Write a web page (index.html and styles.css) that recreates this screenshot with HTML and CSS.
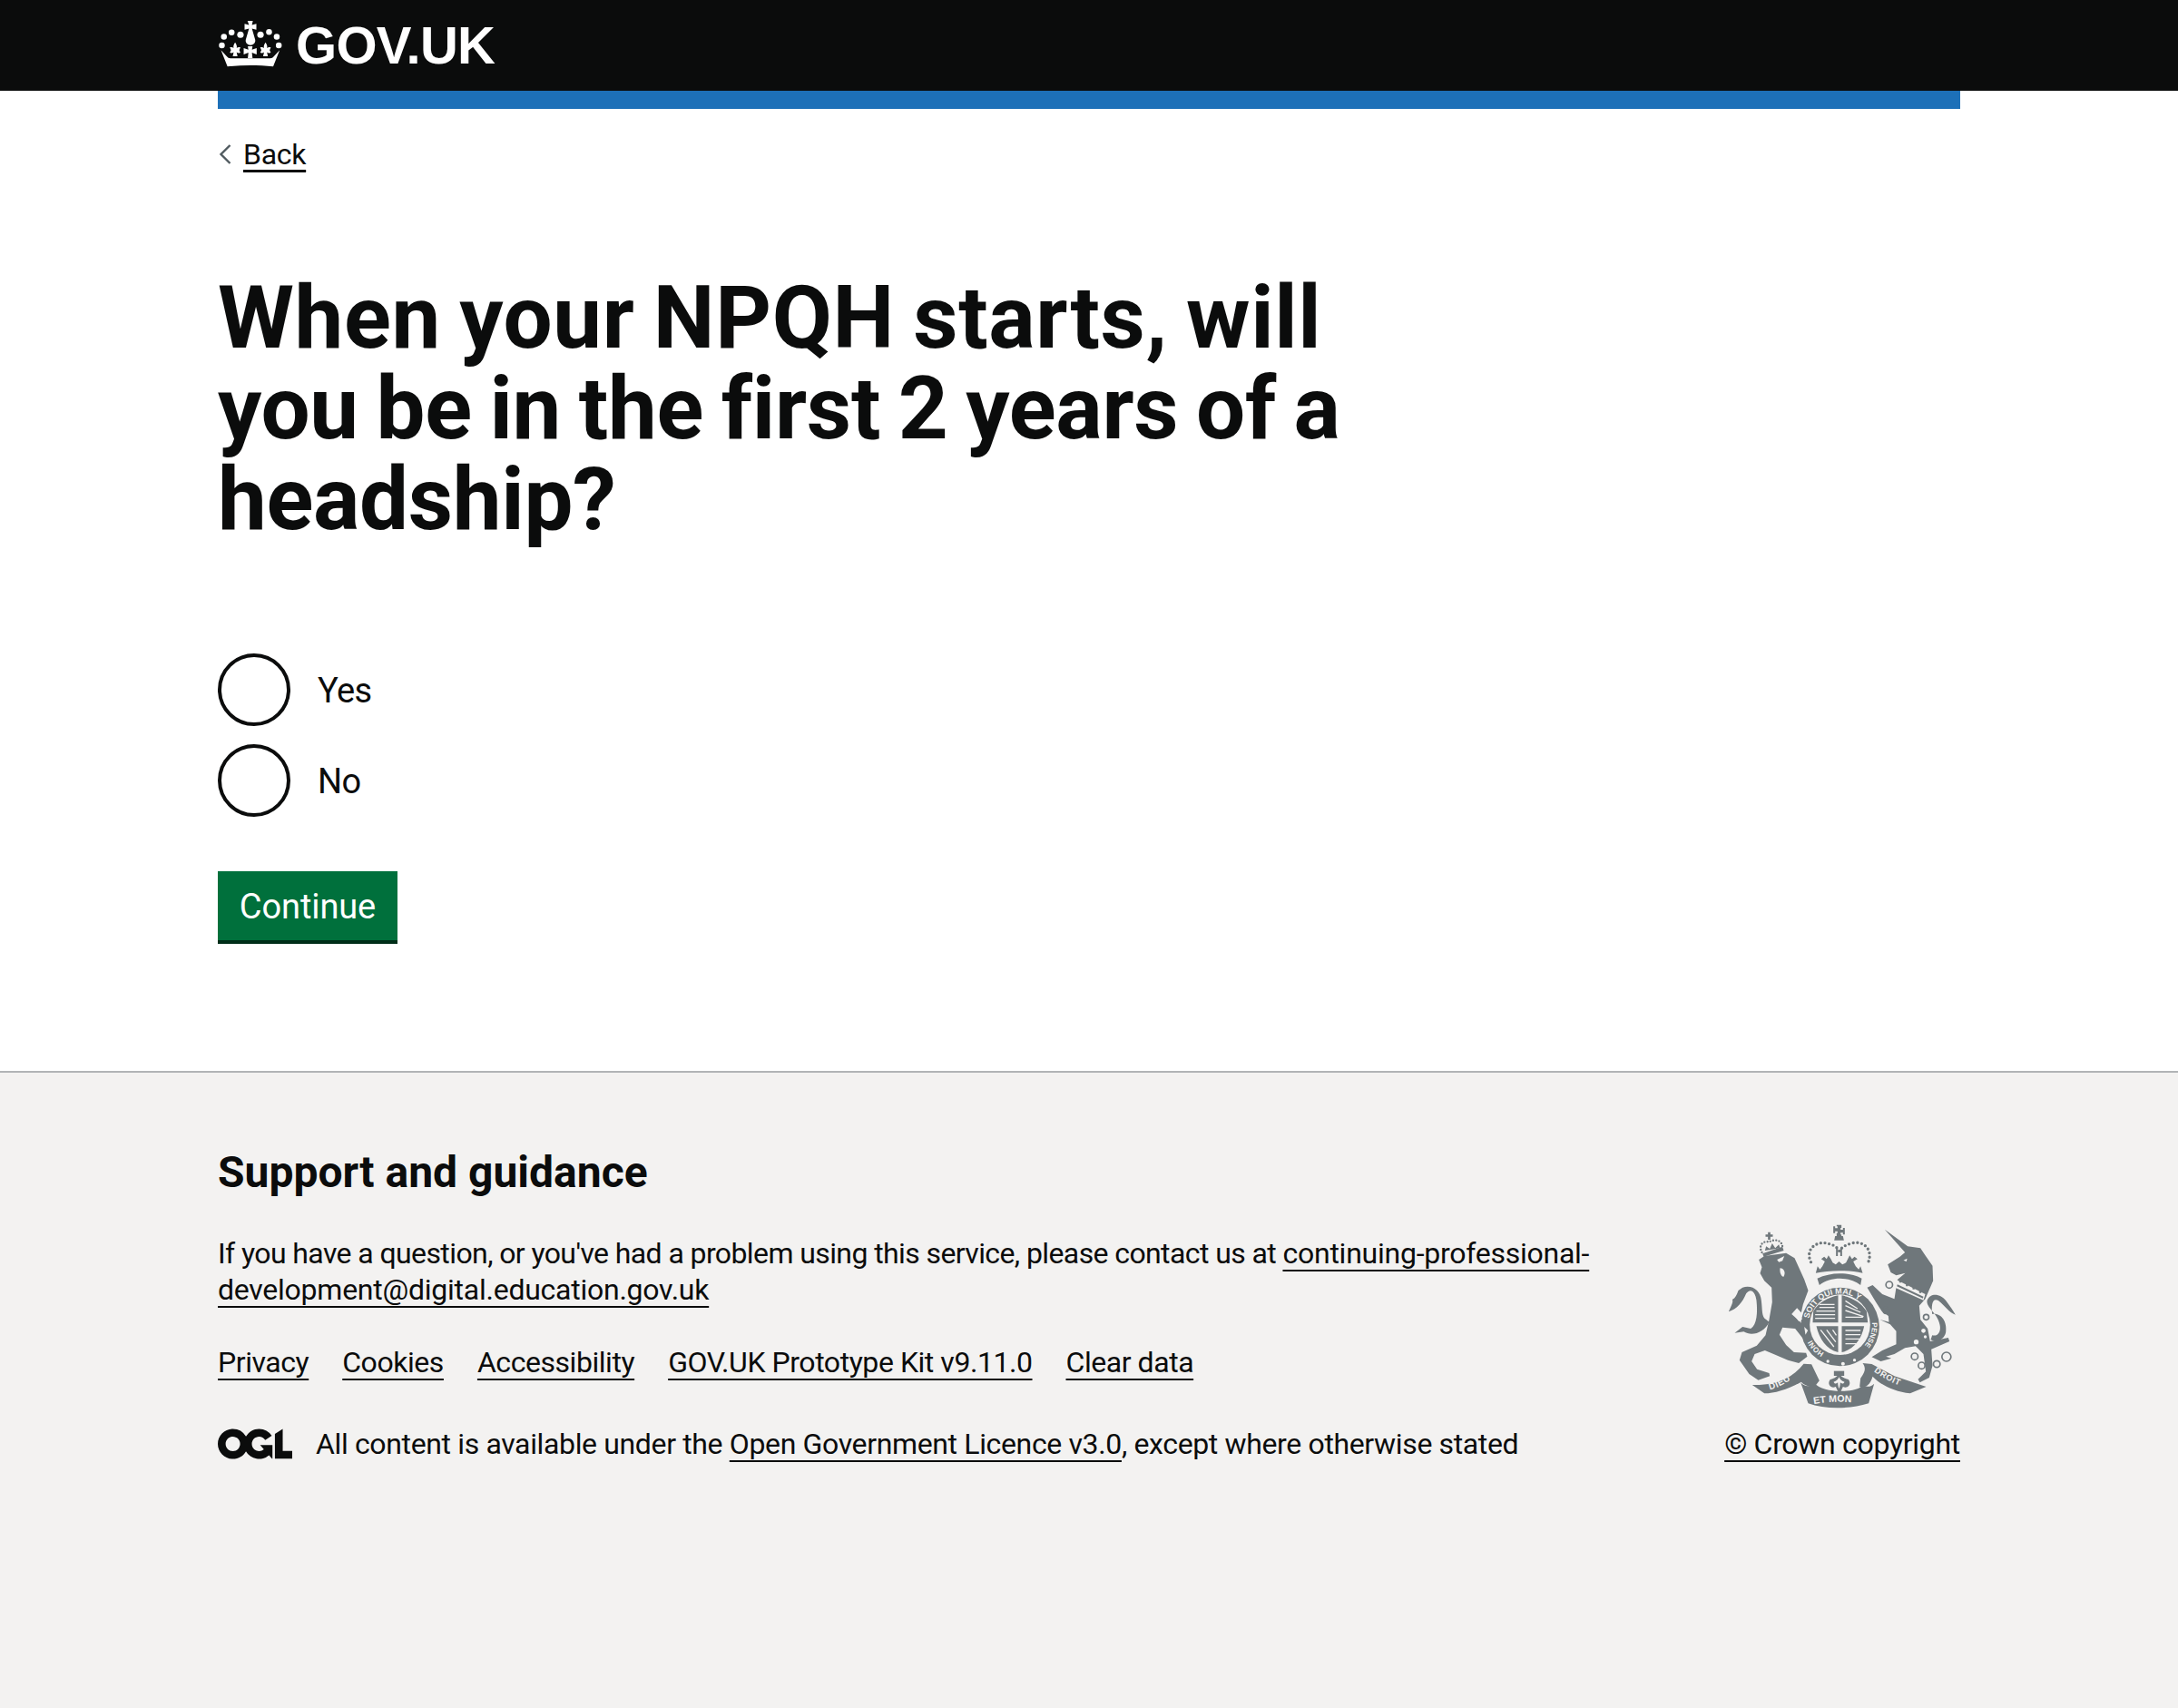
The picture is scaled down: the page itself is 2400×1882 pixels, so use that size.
FILE: index.html
```html
<!DOCTYPE html>
<html lang="en">
<head>
<meta charset="utf-8">
<title>When your NPQH starts, will you be in the first 2 years of a headship?</title>
<link rel="stylesheet" href="styles.css">
</head>
<body>
<header class="site-header">
  <div class="width">
    <a class="logo" href="#">
      <svg class="crown" viewBox="58 62 220 160" aria-hidden="true">
        <g fill="#fff">
          <circle cx="78" cy="119" r="10"/><circle cx="104" cy="104" r="10"/><circle cx="134" cy="112" r="11"/>
          <circle cx="202" cy="112" r="11"/><circle cx="231" cy="103" r="10"/><circle cx="257" cy="119" r="10"/>
          <circle cx="71" cy="148" r="10"/><circle cx="264" cy="148" r="10"/>
          <path d="M158 65h18l-3 14 15-4v20l-15-4 11 38c2 10-6 18-16 18s-18-8-16-18l11-38-15 4V75l15 4z"/>
          <path d="M116 138c5 8 7 13 5 19 3-3 8-4 13-2l-4 9 4 9c-5 2-10 1-13-2l3 14h-16l3-14c-3 3-8 4-13 2l4-9-4-9c5-2 10-1 13 2-2-6 0-11 5-19z"/>
          <path d="M219 138c5 8 7 13 5 19 3-3 8-4 13-2l-4 9 4 9c-5 2-10 1-13-2l3 14h-16l3-14c-3 3-8 4-13 2l4-9-4-9c5-2 10-1 13 2-2-6 0-11 5-19z"/>
          <path d="M159 151h16l-2 12 16-6v22l-16-6 2 18h-16l2-18-16 6v-22l16 6z"/>
          <path d="M68 164l20 22q4 6 12 6h135q8 0 12-6l20-22-22 56c-50-6-105-6-155 0z"/>
        </g>
      </svg>
      <span class="logo-text">GOV.UK</span>
    </a>
  </div>
</header>

<div class="width main-wrap">
  <div class="phase-bar"></div>
  <a class="back" href="#"><svg class="chevron" viewBox="0 0 14 24" aria-hidden="true"><path d="M12.5 2 2.5 12l10 10" fill="none" stroke="#505a5f" stroke-width="2.4"/></svg><span class="back-text">Back</span></a>

  <main class="content">
    <h1 class="title"><span class="title-first">When your NPQH starts, will</span> <span class="title-second">you be in the first 2 years of a</span> headship?</h1>
    <div class="radios">
      <label class="radio"><span class="radio-mark"></span><span class="radio-label">Yes</span></label>
      <label class="radio"><span class="radio-mark"></span><span class="radio-label">No</span></label>
    </div>
    <a class="button" href="#">Continue</a>
  </main>
</div>

<footer class="footer">
  <div class="width">
    <h2 class="footer-title">Support and guidance</h2>
    <div class="meta">
      <div class="meta-main">
        <p class="support">If you have a question, or you've had a problem using this service, please contact us at <a href="#">continuing-professional-development@digital.education.gov.uk</a></p>
        <ul class="links">
          <li><a href="#">Privacy</a></li>
          <li><a href="#">Cookies</a></li>
          <li><a href="#">Accessibility</a></li>
          <li><a href="#">GOV.UK Prototype Kit v9.11.0</a></li>
          <li><a href="#">Clear data</a></li>
        </ul>
        <div class="licence">
          <svg class="ogl" viewBox="0 0 483.2 195.7" aria-hidden="true"><path fill="#0b0c0c" d="M421.5 142.8V.1l-50.7 32.3v161.1h112.4v-50.7zm-122.3-9.6A47.12 47.12 0 0 1 221 97.8c0-26 21.1-47.1 47.1-47.1 16.7 0 31.4 8.7 39.7 21.8l42.7-27.2A97.63 97.63 0 0 0 268.1 0c-36.5 0-68.3 20.1-85.1 49.7A98 98 0 0 0 97.8 0C43.9 0 0 43.9 0 97.8s43.9 97.8 97.8 97.8c36.5 0 68.3-20.1 85.1-49.7a97.76 97.76 0 0 0 149.6 25.4l19.4 22.2h3v-87.8h-80l24.3 27.5zM97.8 145c-26 0-47.1-21.1-47.1-47.1s21.1-47.1 47.1-47.1 47.2 21 47.2 47S123.8 145 97.8 145"/></svg>
          <span>All content is available under the <a href="#">Open Government Licence v3.0</a>, except where otherwise stated</span>
        </div>
      </div>
      <div class="meta-side">
        <svg class="crest" viewBox="70 50 755 615" aria-hidden="true">
          <defs>
            <path id="ringTop" d="M338 365A104 104 0 0 1 535 345"/>
            <path id="ringRight" d="M546 378A107 107 0 0 1 500 473"/>
            <path id="ringLeft" d="M388 478A107 107 0 0 1 335 402"/>
            <path id="ribLeft" d="M208 600Q265 585 312 535"/>
            <path id="ribMid" d="M350 648Q435 632 525 648"/>
            <path id="ribRight" d="M552 540Q600 575 672 600"/>
          </defs>
          <g fill="#6f777b">
            <path d="M172 170 190 158 262 148 290 165 306 200 322 235 335 272 318 318 312 345 298 330 280 350 305 372 330 400 322 436 292 398 250 394 240 418 262 452 288 476 328 478 332 490 304 512 268 502 226 484 192 470 158 482 148 506 166 532 206 545 208 555 170 568 140 548 108 502 116 476 165 454 194 420 206 368 216 310 214 262 190 240 176 215 182 195z"/>
            <path d="M206 376C190 410 150 425 122 408L92 412 118 392 145 398C166 385 168 345 164 305 160 275 145 262 130 282 118 312 98 334 72 342 82 320 88 308 84 302 94 298 100 284 104 272L118 262C150 252 178 272 180 305 184 335 180 360 196 368z"/>
            <path d="M184 150 250 127 254 140 188 160z"/>
            <path d="M202 104h8V94h8v-7h-8v-8h-8v8h-8v7h8z"/>
            <path d="M192 140 196 126 208 134 216 116 226 132 238 120 242 132z"/>
            <path d="M588 70 664 126 680 128 706 132 722 156 746 190 748 240 722 300 702 322 706 368 730 398 738 440 798 428 802 440 742 466 746 520 735 560 704 576 698 565 724 540 716 482 690 456 655 462 620 482 592 490 610 496 575 506 545 492 580 470 626 450 626 406 606 384 572 368 602 376 600 356 578 340 556 306 530 262 548 254 580 284 620 300 630 236 656 214 626 222 608 212 598 186 638 160 655 146z"/>
            <path d="M745 350C775 345 795 375 790 410 785 435 760 445 740 435L745 420C765 425 775 405 770 385 762 345 725 330 728 305 740 275 775 285 790 305 805 325 815 340 822 352 800 345 785 320 765 305 745 295 742 320 745 350z"/>
            <circle cx="440" cy="392" r="130"/>
          </g>
          <path d="M182 146C168 120 190 106 206 112 222 100 250 104 250 130" fill="none" stroke="#6f777b" stroke-width="7" stroke-dasharray="0 10" stroke-linecap="round"/>
          <g fill="#f3f2f1">
            <path d="M232 170 256 158 250 174 238 178z"/>
            <path d="M242 198C254 198 262 212 254 226 246 228 240 212 242 198z"/>
            <path d="M650 172 662 166 660 176z"/>
            <path d="M296 346 316 366 304 374 292 358zM322 392 334 404 326 418z"/>
          </g>
          <g fill="none" stroke="#6f777b" stroke-width="5">
            <circle cx="603" cy="253" r="11"/><circle cx="592" cy="338" r="10"/>
            <circle cx="687" cy="490" r="11"/><circle cx="710" cy="520" r="11"/>
            <circle cx="760" cy="515" r="11"/><circle cx="792" cy="491" r="15"/>
            <circle cx="725" cy="360" r="9"/>
          </g>
          <path d="M626 236 722 284 716 304 622 262z" fill="#f3f2f1"/>
          <path d="M630 252 716 292 714 298 628 258z" fill="#6f777b"/>
          <path d="M636 232h7v14h-7zM658 244h7v14h-7zM680 254h7v14h-7zM702 266h7v14h-7z" fill="#6f777b"/>
          <g fill="#f3f2f1">
            <circle cx="716" cy="405" r="7"/><circle cx="692" cy="442" r="8"/><circle cx="722" cy="425" r="5"/>
            <circle cx="440" cy="385" r="100"/>
            <circle cx="400" cy="506" r="5"/><circle cx="450" cy="514" r="6"/><circle cx="488" cy="502" r="5"/>
          </g>
          <g fill="#6f777b">
            <path d="M352 340C370 312 400 295 434 288V378H350zM446 288C480 295 510 312 528 340L532 378H446zM362 390H434V476C395 468 372 432 362 390zM446 390H520C512 432 486 468 446 476z"/>
          </g>
          <g fill="none" stroke="#f3f2f1" stroke-width="4">
            <path d="M372 318h50M372 328h50M362 340h62M358 352h66M358 364h66M458 306l40 26M458 322l50 22M458 338l60 20M458 360h58"/>
            <path d="M376 402 420 458M396 402 426 442M416 402 428 420"/>
            <path d="M458 404h50M458 418h50M458 432h50M458 448h36"/>
          </g>
          <g fill="#f3f2f1" font-family="'Liberation Sans',sans-serif" font-weight="700">
            <text font-size="27"><textPath href="#ringTop">SOIT QUI MAL Y</textPath></text>
            <text font-size="24"><textPath href="#ringRight">PENSE</textPath></text>
            <text font-size="24"><textPath href="#ringLeft">HONI</textPath></text>
          </g>
          <g fill="#6f777b">
            <path d="M429 55h16v10h-3v6h8v-6h6v22h-6v-6h-8v6h3v10h-16V82h3v-6h-8v6h-6V60h6v6h8v-6h-3z"/>
            <path d="M424 92h26l3 14h-32z"/>
            <path d="M427 132h6v26h-6zM441 132h6v26h-6z"/>
            <path d="M360 214 366 192 374 202 382 192 390 176 378 168 388 160 396 168 402 156 410 168 416 180 426 186 437 176 448 186 460 180 466 168 472 156 480 168 488 160 498 168 484 176 492 192 502 202 508 192 515 214C470 204 405 204 360 214z"/>
            <path d="M365 232C410 210 470 210 512 232L508 254C470 225 410 225 372 254z"/>
          </g>
          <path d="M344 178C322 132 368 104 405 118 422 122 432 130 438 142 446 128 458 122 478 116 520 104 552 140 532 182" fill="none" stroke="#6f777b" stroke-width="10" stroke-dasharray="0 14" stroke-linecap="round"/>
          <g fill="#6f777b">
            <path d="M150 584C230 586 285 560 320 514L346 516 372 570 356 590C340 590 325 588 312 574 270 598 225 612 190 612z"/>
            <path d="M545 515 620 555 725 590 672 612C620 606 575 585 548 556 540 585 522 596 505 590L508 562C526 538 525 526 515 512z"/>
            <path d="M310 576C320 590 345 592 355 578 385 612 488 612 515 586 530 592 545 590 553 580L535 645C470 665 390 665 335 645z"/>
            <path d="M420 538h34v16h-34z"/>
            <path d="M437 545C442 556 452 562 468 566 480 582 465 598 450 590L438 616 426 590C410 598 396 582 408 566 424 562 432 556 437 545z"/>
          </g>
          <path d="M437 558c3 8 8 13 18 16-3 7-10 7-14 2 0 8-2 16-4 20-2-4-4-12-4-20-4 5-11 5-14-2 10-3 15-8 18-16z" fill="#f3f2f1"/>
          <g fill="#f3f2f1" font-family="'Liberation Sans',sans-serif" font-weight="700">
            <text font-size="30" letter-spacing="2"><textPath href="#ribLeft">DIEU</textPath></text>
            <text font-size="32"><textPath href="#ribMid" startOffset="4">ET MON</textPath></text>
            <text font-size="28" letter-spacing="2"><textPath href="#ribRight">DROIT</textPath></text>
          </g>
        </svg>
        <a class="copyright" href="#">© Crown copyright</a>
      </div>
    </div>
  </div>
</footer>
</body>
</html>
```
FILE: styles.css
```css
* { box-sizing: border-box; }
html, body { margin: 0; padding: 0; }
body {
  min-height: 1882px;
  display: flex;
  flex-direction: column;
  font-family: Roboto, Arial, sans-serif;
  color: #0b0c0c;
  background: #fff;
}
a { color: #0b0c0c; text-decoration: underline; text-decoration-thickness: 2px; text-underline-offset: 7px; text-decoration-skip-ink: none; }
.width { width: 1920px; margin: 0 auto; }

.site-header { background: #0b0c0c; height: 100px; }
.logo { display: flex; align-items: center; height: 100px; color: #fff; text-decoration: none; }
.crown { width: 72px; height: 52px; margin-right: 14px; margin-bottom: 5px; display: block; }
.logo-text { font-family: "Liberation Sans", Arial, sans-serif; font-weight: 700; font-size: 58px; line-height: 60px; letter-spacing: -0.7px; }

.phase-bar { height: 20px; background: #1d70b8; }
.back { display: flex; align-items: center; height: 40px; margin-top: 30px; width: max-content; font-size: 32px; line-height: 40px; letter-spacing: -0.3px; }
.chevron { width: 14px; height: 24px; margin-left: 1px; margin-right: 13px; }
.back-text { text-decoration: underline; text-decoration-thickness: 2px; text-underline-offset: 6px; text-decoration-skip-ink: none; }

.content { padding-top: 110px; padding-bottom: 140px; }
.title { margin: 0 0 120px; width: 1280px; font-size: 96px; line-height: 100px; font-weight: 700; letter-spacing: -0.3px; word-spacing: -4px; }
.title-first { letter-spacing: 0.6px; }
.title-second { letter-spacing: -0.25px; }
.radios { display: flex; flex-direction: column; gap: 20px; margin-bottom: 60px; }
.radio { display: flex; align-items: center; height: 80px; }
.radio-mark { width: 80px; height: 80px; border: 4px solid #0b0c0c; border-radius: 50%; background: #fff; }
.radio-label { padding-left: 30px; padding-top: 2px; font-size: 38px; line-height: 50px; letter-spacing: -0.6px; }
.button {
  display: block; width: 198px; height: 76px; margin-bottom: 4px; padding-top: 2px; background: #00703c; color: #fff;
  box-shadow: 0 4px 0 #002d18; text-decoration: none; text-align: center;
  font-size: 38px; line-height: 74px; letter-spacing: -0.1px;
}

.footer { flex: 1; background: #f3f2f1; border-top: 2px solid #b1b4b6; padding-top: 80px; }
.footer-title { margin: 0 0 26px; font-size: 48px; line-height: 60px; font-weight: 700; }
.meta { display: flex; justify-content: space-between; align-items: flex-end; }
.meta-main { width: 1530px; }
.support { margin: 0 0 40px; font-size: 32px; line-height: 40px; letter-spacing: -0.6px; }
.support a { letter-spacing: -0.25px; }
.links { list-style: none; display: flex; gap: 37px; margin: 0 0 50px; padding: 0; font-size: 32px; line-height: 40px; letter-spacing: -0.45px; }
.licence { display: flex; align-items: center; gap: 26px; font-size: 32px; line-height: 40px; letter-spacing: -0.36px; }
.ogl { width: 82px; height: 34px; }
.meta-side { display: flex; flex-direction: column; align-items: flex-end; gap: 18px; }
.crest { width: 252px; height: 205px; display: block; align-self: center; }
.copyright { font-size: 32px; line-height: 40px; letter-spacing: -0.3px; }
```
